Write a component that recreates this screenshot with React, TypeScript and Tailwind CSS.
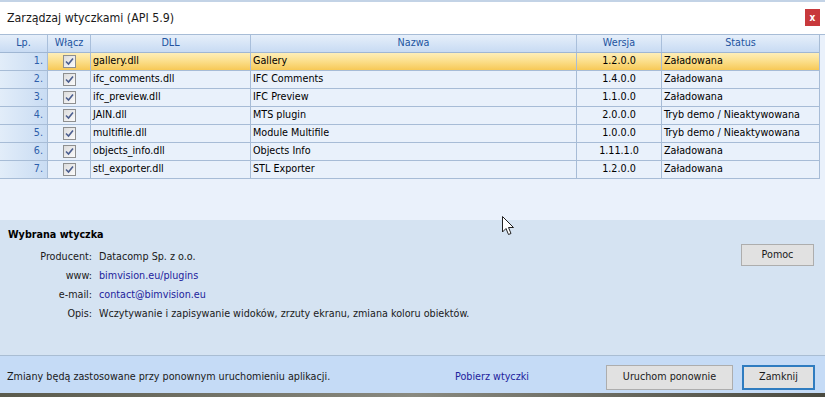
import React from 'react';

const plugins = [
  { lp: 1, dll: 'gallery.dll', name: 'Gallery', ver: '1.2.0.0', status: 'Załadowana' },
  { lp: 2, dll: 'ifc_comments.dll', name: 'IFC Comments', ver: '1.4.0.0', status: 'Załadowana' },
  { lp: 3, dll: 'ifc_preview.dll', name: 'IFC Preview', ver: '1.1.0.0', status: 'Załadowana' },
  { lp: 4, dll: 'JAIN.dll', name: 'MTS plugin', ver: '2.0.0.0', status: 'Tryb demo / Nieaktywowana' },
  { lp: 5, dll: 'multifile.dll', name: 'Module Multifile', ver: '1.0.0.0', status: 'Tryb demo / Nieaktywowana' },
  { lp: 6, dll: 'objects_info.dll', name: 'Objects Info', ver: '1.11.1.0', status: 'Załadowana' },
  { lp: 7, dll: 'stl_exporter.dll', name: 'STL Exporter', ver: '1.2.0.0', status: 'Załadowana' },
];

const cols = 'grid grid-cols-[48px_43px_160px_326px_85px_157px]';

function CheckBox() {
  return (
    <div className="w-[13px] h-[13px] border border-[#8e8f8f] bg-gradient-to-br from-[#dcdcdc] to-[#fbfbfb] flex items-center justify-center">
      <svg width="9" height="9" viewBox="0 0 9 9">
        <path d="M1 4.5 L3.5 7 L8 1.5" fill="none" stroke="#4b5e8f" strokeWidth="1.6" />
      </svg>
    </div>
  );
}

export default function App() {
  return (
    <div
      className="relative w-[825px] h-[397px] flex flex-col bg-white text-[10.7px] text-black overflow-hidden"
      style={{ fontFamily: '"DejaVu Sans Condensed", "DejaVu Sans", sans-serif' }}
    >
      <div className="h-[2px] bg-[#c3d3e6]" />

      {/* Title bar */}
      <div className="h-[32px] flex items-center justify-between pl-[7px] pr-[5px] bg-white">
        <span className="text-[12.3px] text-[#1a1a1a]">Zarządzaj wtyczkami (API 5.9)</span>
        <div className="w-[15px] h-[17px] bg-[#c8393c] text-white text-[10px] font-bold flex items-center justify-center mb-[1px]">x</div>
      </div>

      {/* Grid */}
      <div className="h-[186px] bg-[#eaf1fb] border-t border-[#a7bcd6]">
        <div className="w-[820px] border-r border-[#a7bcd6]">
          <div className={`${cols} h-[18px] bg-gradient-to-b from-[#e6effa] to-[#c8dbf3] text-[#2254a0] border-b border-[#9fb6d3]`}>
            {['Lp.', 'Włącz', 'DLL', 'Nazwa', 'Wersja', 'Status'].map(h => (
              <div key={h} className="flex items-center justify-center border-r border-[#a9bfdb] last:border-r-0">{h}</div>
            ))}
          </div>
          {plugins.map(p => {
            const sel = p.lp === 1;
            const cell = 'flex items-center border-r border-b border-[#a7bcd6]';
            return (
              <div
                key={p.lp}
                className={`${cols} h-[18px] ${sel ? 'bg-gradient-to-b from-[#fdeeb9] via-[#fbdd86] to-[#f6c64e]' : 'bg-[#e9f1fb]'}`}
              >
                <div className="flex items-center justify-end pr-[4px] border-r border-b border-[#a7bcd6] bg-gradient-to-r from-[#e2edf9] to-[#c9dcf3] text-[#2d5fab]">{p.lp}.</div>
                <div className={`${cell} justify-center`}><CheckBox /></div>
                <div className={`${cell} pl-[2px]`}>{p.dll}</div>
                <div className={`${cell} pl-[2px]`}>{p.name}</div>
                <div className={`${cell} justify-center`}>{p.ver}</div>
                <div className="flex items-center pl-[2px] border-b border-[#a7bcd6]">{p.status}</div>
              </div>
            );
          })}
        </div>
      </div>

      {/* Selected plugin details */}
      <div className="flex-1 bg-[#d5e3f2] border-b border-[#a9bdd3] flex justify-between pl-[8px] pr-[11px] pt-[7px]">
        <div className="flex flex-col">
          <div className="font-bold h-[16px] leading-[16px] mb-[5px]">Wybrana wtyczka</div>
          {[
            ['Producent:', 'Datacomp Sp. z o.o.', false],
            ['www:', 'bimvision.eu/plugins', true],
            ['e-mail:', 'contact@bimvision.eu', true],
            ['Opis:', 'Wczytywanie i zapisywanie widoków, zrzuty ekranu, zmiana koloru obiektów.', false],
          ].map(([label, value, link]) => (
            <div key={label as string} className="flex h-[19px] items-center">
              <span className="w-[84px] text-right text-[#1a1a1a]">{label}</span>
              <span className={`pl-[7px] ${link ? 'text-[#22229c]' : 'text-[#1a1a1a]'}`}>{value}</span>
            </div>
          ))}
        </div>
        <button className="mt-[17px] w-[73px] h-[22px] bg-[#e1e1e1] border border-[#adadad] text-[#1a1a1a]">Pomoc</button>
      </div>

      {/* Footer */}
      <div className="h-[37px] bg-[#c5dbf6] flex items-center pt-[6px] pr-[10px]">
        <span className="w-[455px] pl-[7px] text-[#1a1a1a]">Zmiany będą zastosowane przy ponownym uruchomieniu aplikacji.</span>
        <span className="text-[#22229c]">Pobierz wtyczki</span>
        <div className="ml-auto flex gap-[9px]">
          <button className="w-[127px] h-[25px] bg-[#e1e1e1] border border-[#adadad] text-[#1a1a1a]">Uruchom ponownie</button>
          <button className="w-[73px] h-[25px] bg-[#e1e1e1] border-2 border-[#2f7cc0] text-[#1a1a1a]">Zamknij</button>
        </div>
      </div>
      <div className="h-[4px] bg-gradient-to-r from-[#5a5a4c] via-[#8a8a80] to-[#4a4a40]" />

      {/* mouse cursor */}
      <svg className="absolute left-[502px] top-[216px]" width="13" height="20" viewBox="0 0 13 20">
        <path d="M0.5 0.5 L0.5 16 L4 12.5 L6.5 18.5 L9 17.5 L6.5 11.5 L11.5 11.5 Z" fill="white" stroke="#222" strokeWidth="1" />
      </svg>
    </div>
  );
}
